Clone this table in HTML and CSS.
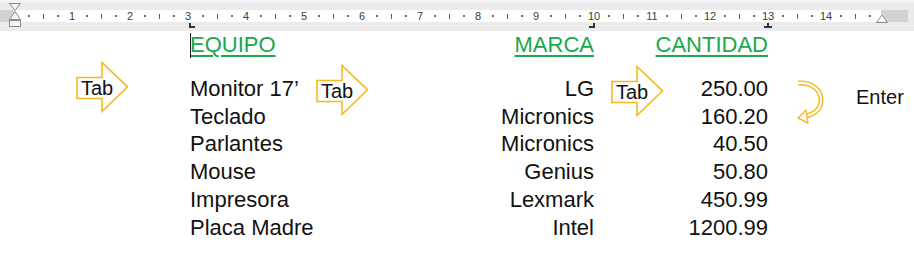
FILE: index.html
```html
<!DOCTYPE html>
<html lang="es">
<head>
  <meta charset="UTF-8">
  <title>Tabulaciones</title>
  <link rel="stylesheet" href="styles.css">
</head>
<body>
  <!-- Regla horizontal -->
  <div class="ruler">
    <div class="ruler-band">
      <div class="ruler-margin-left"></div>
      <div class="ruler-scale">
        <div class="unit"><i class="dot"></i><i class="tick"></i><i class="dot"></i><span class="num">1</span></div>
        <div class="unit"><i class="dot"></i><i class="tick"></i><i class="dot"></i><span class="num">2</span></div>
        <div class="unit"><i class="dot"></i><i class="tick"></i><i class="dot"></i><span class="num">3</span></div>
        <div class="unit"><i class="dot"></i><i class="tick"></i><i class="dot"></i><span class="num">4</span></div>
        <div class="unit"><i class="dot"></i><i class="tick"></i><i class="dot"></i><span class="num">5</span></div>
        <div class="unit"><i class="dot"></i><i class="tick"></i><i class="dot"></i><span class="num">6</span></div>
        <div class="unit"><i class="dot"></i><i class="tick"></i><i class="dot"></i><span class="num">7</span></div>
        <div class="unit"><i class="dot"></i><i class="tick"></i><i class="dot"></i><span class="num">8</span></div>
        <div class="unit"><i class="dot"></i><i class="tick"></i><i class="dot"></i><span class="num">9</span></div>
        <div class="unit"><i class="dot"></i><i class="tick"></i><i class="dot"></i><span class="num">10</span></div>
        <div class="unit"><i class="dot"></i><i class="tick"></i><i class="dot"></i><span class="num">11</span></div>
        <div class="unit"><i class="dot"></i><i class="tick"></i><i class="dot"></i><span class="num">12</span></div>
        <div class="unit"><i class="dot"></i><i class="tick"></i><i class="dot"></i><span class="num">13</span></div>
        <div class="unit"><i class="dot"></i><i class="tick"></i><i class="dot"></i><span class="num">14</span></div>
        <div class="unit"><i class="dot"></i><i class="tick"></i><i class="dot"></i></div>
      </div>
      <div class="ruler-margin-right"></div>
    </div>

    <!-- Marcadores de sangría -->
    <svg class="indent-left" width="14" height="27" viewBox="0 0 14 27">
      <path d="M1.5 2.5 H12.5 L7 9.5 Z" fill="#f4f4f4" stroke="#8a8a8a"/>
      <path d="M7 10.5 L12.5 18.5 H1.5 Z" fill="#f4f4f4" stroke="#8a8a8a"/>
      <rect x="1.5" y="19.5" width="11" height="6" fill="#f4f4f4" stroke="#8a8a8a"/>
    </svg>
    <svg class="indent-right" width="14" height="10" viewBox="0 0 14 10">
      <path d="M7 1 L12.5 8.5 H1.5 Z" fill="#fff" stroke="#8a8a8a"/>
    </svg>

    <!-- Tabulaciones -->
    <span class="tab-stop tab-left"></span>
    <span class="tab-stop tab-right"></span>
    <span class="tab-stop tab-decimal"></span>
  </div>

  <!-- Documento -->
  <div class="doc">
    <div class="sheet">
      <div class="head first">EQUIPO</div>
      <div class="head right">MARCA</div>
      <div class="head right">CANTIDAD</div>

      <div>Monitor 17’</div><div class="right">LG</div><div class="right">250.00</div>
      <div>Teclado</div><div class="right">Micronics</div><div class="right">160.20</div>
      <div>Parlantes</div><div class="right">Micronics</div><div class="right">40.50</div>
      <div>Mouse</div><div class="right">Genius</div><div class="right">50.80</div>
      <div>Impresora</div><div class="right">Lexmark</div><div class="right">450.99</div>
      <div>Placa Madre</div><div class="right">Intel</div><div class="right">1200.99</div>
    </div>

    <!-- Anotaciones -->
    <div class="tab-arrow arrow-1">
      <svg width="53" height="52" viewBox="0 0 53 52">
        <path d="M1 16.5 H26 V1.5 L51.5 25.8 L26 50.5 V37.5 H1 Z" fill="#fff" stroke="#f8b91e" stroke-width="1.6" stroke-linejoin="miter"/>
      </svg>
      <span>Tab</span>
    </div>
    <div class="tab-arrow arrow-2">
      <svg width="53" height="52" viewBox="0 0 53 52">
        <path d="M1 16.5 H26 V1.5 L51.5 25.8 L26 50.5 V37.5 H1 Z" fill="#fff" stroke="#f8b91e" stroke-width="1.6" stroke-linejoin="miter"/>
      </svg>
      <span>Tab</span>
    </div>
    <div class="tab-arrow arrow-3">
      <svg width="53" height="52" viewBox="0 0 53 52">
        <path d="M1 16.5 H26 V1.5 L51.5 25.8 L26 50.5 V37.5 H1 Z" fill="#fff" stroke="#f8b91e" stroke-width="1.6" stroke-linejoin="miter"/>
      </svg>
      <span>Tab</span>
    </div>

    <svg class="enter-arrow" width="30" height="46" viewBox="0 0 30 46">
      <path d="M3 4 C17 3 26 11 26 21 C26 30 19 35 11 37" fill="none" stroke="#f8b91e" stroke-width="5" stroke-linecap="butt"/>
      <path d="M3 4 C17 3 26 11 26 21 C26 30 19 35 11 37" fill="none" stroke="#fff" stroke-width="2.2"/>
      <path d="M3 39 L11 31 L13 44 Z" fill="#fff" stroke="#f8b91e" stroke-width="1.4" stroke-linejoin="round"/>
    </svg>
    <span class="enter-label">Enter</span>
  </div>
</body>
</html>
```

FILE: styles.css
```css
* {
  box-sizing: border-box;
}

body {
  margin: 0;
  background: #fff;
  font-family: "Liberation Sans", Arial, sans-serif;
  color: #111;
}

/* Regla */
.ruler {
  position: relative;
  height: 31px;
  padding-top: 10px;
  background: #ebebeb;
  border-top: 3px solid #f3f3f3;
}

.ruler-band {
  display: flex;
  height: 12px;
  margin-top: -3px;
}

.ruler-margin-left {
  width: 14px;
  background: #d2d2d2;
}

.ruler-scale {
  display: flex;
  width: 867px;
  background: #fff;
  overflow: hidden;
}

.unit {
  flex: 0 0 58px;
  min-width: 0;
  display: grid;
  grid-template-columns: repeat(4, 14.5px);
  align-items: center;
  justify-items: center;
  padding-left: 7.25px;
}

.dot {
  width: 2px;
  height: 2px;
  background: #6f6f6f;
}

.tick {
  width: 1px;
  height: 5px;
  background: #5a5a5a;
}

.num {
  font-size: 11px;
  line-height: 12px;
  color: #404040;
}

.ruler-margin-right {
  width: 27px;
  background: #d2d2d2;
}

.indent-left {
  position: absolute;
  left: 8px;
  top: -2px;
}

.indent-right {
  position: absolute;
  left: 875px;
  top: 11px;
}

/* Tabulaciones en la regla */
.tab-stop {
  position: absolute;
  top: 20px;
  width: 6px;
  height: 5px;
}

.tab-left {
  left: 189px;
  border-left: 2px solid #333;
  border-bottom: 2px solid #333;
}

.tab-right {
  left: 589px;
  border-right: 2px solid #333;
  border-bottom: 2px solid #333;
}

.tab-decimal {
  left: 764px;
  width: 8px;
  border-bottom: 2px solid #333;
}

.tab-decimal::before {
  content: "";
  position: absolute;
  left: 3px;
  top: 0;
  width: 2px;
  height: 5px;
  background: #333;
}

/* Documento */
.doc {
  position: relative;
  height: 226px;
}

.sheet {
  display: grid;
  grid-template-columns: 200px 204px 174px;
  margin-left: 190px;
  font-size: 22px;
  line-height: 27.8px;
}

.head {
  color: #19a84b;
  text-decoration: underline;
  text-decoration-thickness: 2px;
  text-underline-offset: 3px;
  padding-bottom: 16px;
}

.first {
  position: relative;
}

.first::before {
  content: "";
  position: absolute;
  left: 0;
  top: 2px;
  width: 1px;
  height: 25px;
  background: #222;
}

.right {
  text-align: right;
}

/* Flechas de anotación */
.tab-arrow {
  position: absolute;
  width: 53px;
  height: 52px;
}

.tab-arrow svg {
  display: block;
}

.tab-arrow span {
  position: absolute;
  left: 5px;
  top: 17px;
  font-size: 20px;
  line-height: 21px;
  color: #111;
}

.arrow-1 {
  left: 76px;
  top: 30px;
}

.arrow-2 {
  left: 316px;
  top: 33px;
}

.arrow-3 {
  left: 611px;
  top: 34px;
}

.enter-arrow {
  position: absolute;
  left: 795px;
  top: 48px;
}

.enter-label {
  position: absolute;
  left: 856px;
  top: 55px;
  font-size: 20px;
  line-height: 22px;
  color: #111;
}
```
